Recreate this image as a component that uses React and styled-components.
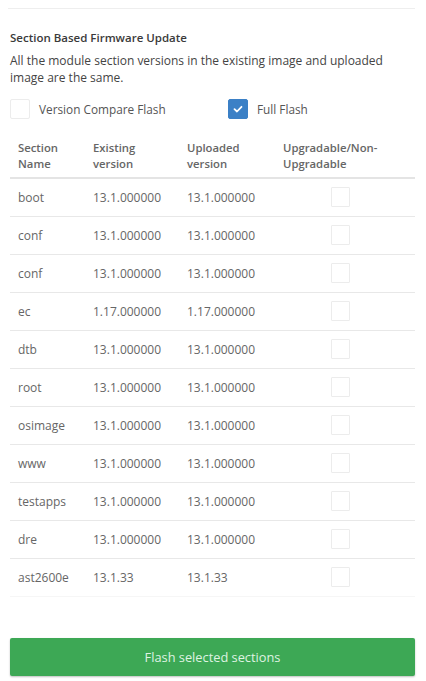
import React from 'react'
import styled, { createGlobalStyle } from 'styled-components'

const GlobalStyle = createGlobalStyle`
  html, body {
    margin: 0;
    padding: 0;
    background: #fff;
  }
  body {
    font-family: "Open Sans", "Noto Sans", sans-serif;
    color: #555;
  }
`

const SECTIONS = [
  { name: 'boot', existing: '13.1.000000', uploaded: '13.1.000000' },
  { name: 'conf', existing: '13.1.000000', uploaded: '13.1.000000' },
  { name: 'conf', existing: '13.1.000000', uploaded: '13.1.000000' },
  { name: 'ec', existing: '1.17.000000', uploaded: '1.17.000000' },
  { name: 'dtb', existing: '13.1.000000', uploaded: '13.1.000000' },
  { name: 'root', existing: '13.1.000000', uploaded: '13.1.000000' },
  { name: 'osimage', existing: '13.1.000000', uploaded: '13.1.000000' },
  { name: 'www', existing: '13.1.000000', uploaded: '13.1.000000' },
  { name: 'testapps', existing: '13.1.000000', uploaded: '13.1.000000' },
  { name: 'dre', existing: '13.1.000000', uploaded: '13.1.000000' },
  { name: 'ast2600e', existing: '13.1.33', uploaded: '13.1.33' },
]

export default function App() {
  return (
    <Page>
      <GlobalStyle />
      <TopRule />
      <Title>Section Based Firmware Update</Title>
      <Description>
        All the module section versions in the existing image and uploaded image are the same.
      </Description>
      <Options>
        <Option>
          <Box />
          <span>Version Compare Flash</span>
        </Option>
        <Option>
          <Box checked>
            <svg width="12" height="12" viewBox="0 0 12 12">
              <path d="M2.5 6.2 L5 8.5 L9.5 3.8" fill="none" stroke="#fff" strokeWidth="1.8" strokeLinecap="round" strokeLinejoin="round" />
            </svg>
          </Box>
          <span>Full Flash</span>
        </Option>
      </Options>
      <Table>
        <colgroup>
          <col style={{ width: 75 }} />
          <col style={{ width: 94 }} />
          <col style={{ width: 96 }} />
          <col />
        </colgroup>
        <thead>
          <tr>
            <Th>Section<br />Name</Th>
            <Th>Existing<br />version</Th>
            <Th>Uploaded<br />version</Th>
            <Th>Upgradable/Non-<br />Upgradable</Th>
          </tr>
        </thead>
        <tbody>
          {SECTIONS.map((s, i) => (
            <Row key={i} last={i === SECTIONS.length - 1}>
              <Td>{s.name}</Td>
              <Td>{s.existing}</Td>
              <Td>{s.uploaded}</Td>
              <Td><RowBox /></Td>
            </Row>
          ))}
        </tbody>
      </Table>
      <FlashButton>Flash selected sections</FlashButton>
    </Page>
  )
}

const Page = styled.div`
  width: 426px;
  height: 681px;
  box-sizing: border-box;
  padding: 8px 11px 0 10px;
  display: flex;
  flex-direction: column;
`

const TopRule = styled.div`
  height: 1px;
  background: #eeeeee;
  margin: 0 0 21px -2px;
`

const Title = styled.div`
  font-size: 11.5px;
  font-weight: 600;
  color: #3a3a3a;
  line-height: 16px;
`

const Description = styled.div`
  margin-top: 6px;
  font-size: 12px;
  line-height: 17px;
  color: #444;
`

const Options = styled.div`
  display: flex;
  align-items: center;
  margin-top: 12px;
  height: 22px;
`

const Option = styled.label`
  display: flex;
  flex-shrink: 0;
  align-items: center;
  gap: 9px;
  font-size: 11.8px;
  color: #555;
  width: 218px;
  &:last-child {
    width: auto;
  }
`

const Box = styled.span`
  display: inline-flex;
  align-items: center;
  justify-content: center;
  width: 20px;
  height: 20px;
  box-sizing: border-box;
  border-radius: 2px;
  border: 1px solid ${p => (p.checked ? '#3b80c6' : '#ececec')};
  background: ${p => (p.checked ? '#3b80c6' : '#fff')};
`

const Table = styled.table`
  width: 405px;
  border-collapse: collapse;
  table-layout: fixed;
  margin-top: 14px;
`

const Th = styled.th`
  text-align: left;
  font-weight: 600;
  font-size: 11.3px;
  line-height: 16px;
  color: #666;
  padding: 6px 8px 5px;
  border-bottom: 2px solid #e4e4e4;
  vertical-align: top;
`

const Row = styled.tr`
  height: 38px;
  border-bottom: 1px solid ${p => (p.last ? '#f6f6f6' : '#e8e8e8')};
`

const Td = styled.td`
  font-size: 12px;
  color: #666;
  padding: 0 8px;
  vertical-align: middle;
  white-space: nowrap;
`

const RowBox = styled.span`
  display: block;
  width: 19px;
  height: 20px;
  box-sizing: border-box;
  border: 1px solid #ececec;
  border-radius: 1px;
  margin-left: 48px;
`

const FlashButton = styled.button`
  margin-top: 41px;
  height: 38px;
  width: 405px;
  border: none;
  border-radius: 2px;
  background: #3da855;
  color: #dff3e2;
  font-family: "Open Sans", "Noto Sans", sans-serif;
  font-size: 12.8px;
  box-shadow: 0 1px 2px rgba(0, 0, 0, 0.25);
`
